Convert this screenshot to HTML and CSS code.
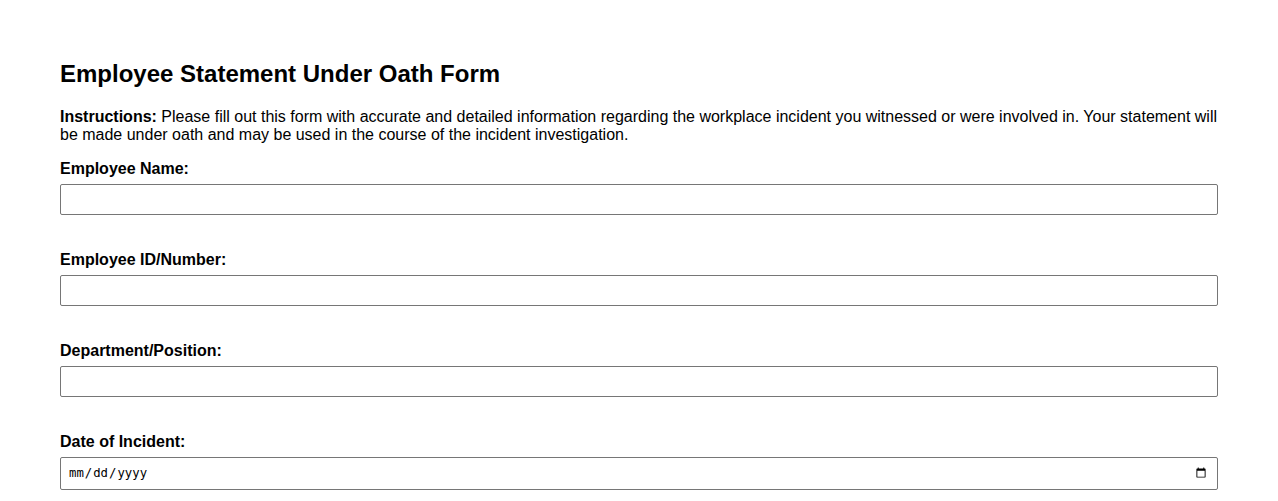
FILE: index.html
```html
<!DOCTYPE html>
<html lang="en">
<head>
  <meta charset="UTF-8">
  <title>Employee Statement Under Oath Form</title>
  <meta name="viewport" content="width=device-width, initial-scale=1.0">
  <link rel="stylesheet" href="styles.css">
</head>
<body>
  <div class="container">
    <h2>Employee Statement Under Oath Form</h2>
    <p class="instructions"><strong>Instructions:</strong> Please fill out this form with accurate and detailed information regarding the workplace incident you witnessed or were involved in. Your statement will be made under oath and may be used in the course of the incident investigation.</p>
    <form>
      <label for="name">Employee Name:</label>
      <input type="text" id="name">

      <label for="number">Employee ID/Number:</label>
      <input type="text" id="number">

      <label for="position">Department/Position:</label>
      <input type="text" id="position">

      <label for="date">Date of Incident:</label>
      <input type="date" id="date">
    </form>
  </div>
</body>
</html>
```

FILE: styles.css
```css
html, body {
  height: 100%;
  overflow: hidden;
}

body {
  font-family: "Liberation Sans", Arial, sans-serif;
  font-size: 16px;
  margin: 0;
  padding: 0;
  background: white;
  color: black;
}

.container {
  padding: 40px 60px;
}

h2 {
  font-size: 24px;
  margin: 20px 0;
}

.instructions {
  margin: 0 0 16px;
  line-height: 18px;
}

label {
  display: block;
  font-weight: bold;
  margin-bottom: 6px;
}

input {
  display: block;
  box-sizing: border-box;
  width: 100%;
  height: 31px;
  padding: 6px;
  margin-bottom: 36px;
  border: 1px solid #767676;
  border-radius: 2px;
  background: white;
}

input[type="date"] {
  height: 33px;
  padding: 6px 8px 6px 7px;
  font-family: "DejaVu Sans Mono", monospace;
  font-size: 12.3px;
}
```
